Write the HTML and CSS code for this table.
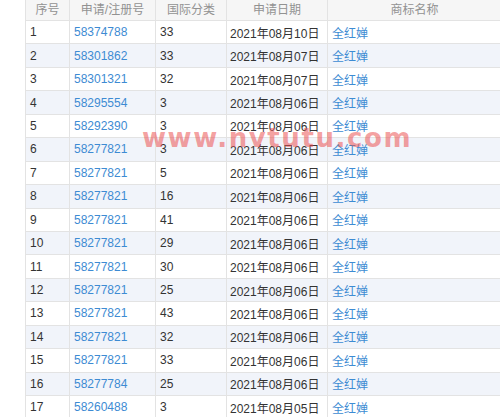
FILE: index.html
```html
<!DOCTYPE html>
<html lang="zh-CN">
<head>
    <meta charset="UTF-8">
    <title>商标列表</title>
    <link rel="stylesheet" href="styles.css">
</head>
<body>
    <div class="wrap">
        <table class="tm-table">
            <colgroup>
                <col class="c-no">
                <col class="c-reg">
                <col class="c-cls">
                <col class="c-date">
                <col class="c-name">
            </colgroup>
            <thead>
                <tr>
                    <th>序号</th>
                    <th>申请/注册号</th>
                    <th>国际分类</th>
                    <th>申请日期</th>
                    <th>商标名称</th>
                </tr>
            </thead>
            <tbody id="rows"></tbody>
        </table>
        <div class="watermark">www.nvtutu.com</div>
    </div>

    <script>
        const data = [
            ['58374788', '33', '2021年08月10日'],
            ['58301862', '33', '2021年08月07日'],
            ['58301321', '32', '2021年08月07日'],
            ['58295554', '3', '2021年08月06日'],
            ['58292390', '3', '2021年08月06日'],
            ['58277821', '3', '2021年08月06日'],
            ['58277821', '5', '2021年08月06日'],
            ['58277821', '16', '2021年08月06日'],
            ['58277821', '41', '2021年08月06日'],
            ['58277821', '29', '2021年08月06日'],
            ['58277821', '30', '2021年08月06日'],
            ['58277821', '25', '2021年08月06日'],
            ['58277821', '43', '2021年08月06日'],
            ['58277821', '32', '2021年08月06日'],
            ['58277821', '33', '2021年08月06日'],
            ['58277784', '25', '2021年08月06日'],
            ['58260488', '3', '2021年08月05日']
        ];

        const tbody = document.getElementById('rows');
        tbody.innerHTML = data.map((row, i) => `
            <tr>
                <td>${i + 1}</td>
                <td><a href="#">${row[0]}</a></td>
                <td>${row[1]}</td>
                <td class="date">${row[2]}</td>
                <td><a href="#">全红婵</a></td>
            </tr>`).join('');
    </script>
</body>
</html>
```

FILE: styles.css
```css
* {
    margin: 0;
    padding: 0;
    box-sizing: border-box;
}

body {
    font-family: 'Liberation Sans', 'Noto Sans CJK SC', sans-serif;
    font-size: 12px;
    color: #333;
    background: #fff;
    overflow: hidden;
}

.wrap {
    position: relative;
    padding-left: 25px;
}

.tm-table {
    width: 477px;
    border-collapse: collapse;
    table-layout: fixed;
}

.c-no { width: 44px; }
.c-reg { width: 86px; }
.c-cls { width: 71px; }
.c-date { width: 101px; }

.tm-table th,
.tm-table td {
    border: 1px solid #e3e3e3;
    white-space: nowrap;
    overflow: hidden;
}

.tm-table thead tr {
    height: 20.5px;
}

.tm-table th {
    background: #f6f6f6;
    color: #929292;
    font-weight: normal;
    text-align: center;
    padding: 0 0 3px;
    border-top: none;
}

.tm-table tbody tr {
    height: 23.44px;
}

.tm-table td {
    padding: 0 4px;
    text-align: left;
}

.tm-table td.date {
    padding-left: 3px;
}

.tm-table tbody tr:nth-child(even) td {
    background: #f1f4fa;
}

.tm-table a {
    color: #3d8bd3;
    text-decoration: none;
}

.watermark {
    position: absolute;
    left: 142px;
    top: 123px;
    font-family: 'DejaVu Sans', sans-serif;
    font-size: 26px;
    font-weight: bold;
    letter-spacing: 1.6px;
    color: rgba(236, 80, 80, 0.55);
    pointer-events: none;
}
```
